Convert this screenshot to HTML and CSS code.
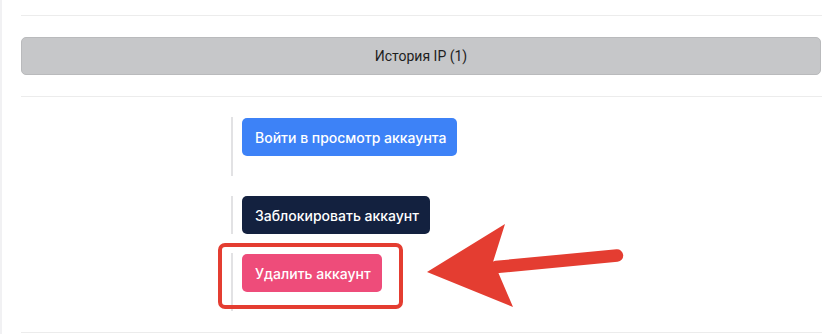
FILE: index.html
```html
<!DOCTYPE html>
<html lang="ru">
<head>
<meta charset="utf-8">
<link rel="stylesheet" href="styles.css">
</head>
<body>
<div class="page">
  <div class="panel">
    <div class="rule rule-top"></div>
    <button class="ip-btn">История IP (1)</button>
    <div class="rule rule-mid"></div>
    <div class="actions">
      <div class="group group-first">
        <button class="btn btn-blue">Войти в просмотр аккаунта</button>
      </div>
      <div class="group group-second">
        <button class="btn btn-navy">Заблокировать аккаунт</button>
      </div>
      <div class="group group-third">
        <button class="btn btn-pink">Удалить аккаунт</button>
      </div>
    </div>
    <div class="rule rule-bottom"></div>
  </div>
  <div class="highlight"></div>
  <svg class="arrow" width="822" height="334" viewBox="0 0 822 334">
    <line x1="496" y1="267" x2="617" y2="255.5" stroke="#e43d31" stroke-width="12.5" stroke-linecap="round"/>
    <polygon points="427,272 505,224 493,262 498,272 513,307" fill="#e43d31"/>
  </svg>
</div>
</body>
</html>
```
FILE: styles.css
```css
* { box-sizing: border-box; }
html, body { margin: 0; padding: 0; background: #fff; }
body { font-family: Inter, "Noto Sans", sans-serif; }

.page {
  position: relative;
  width: 822px;
  height: 334px;
  overflow: hidden;
}

.panel {
  border-left: 2px solid #f1f1f3;
  height: 334px;
  padding-left: 19px;
  padding-top: 15px;
  display: flex;
  flex-direction: column;
}

.rule {
  height: 1px;
  background: #ececec;
  width: 801px;
}

.ip-btn {
  margin-top: 21px;
  width: 800px;
  height: 38px;
  background: #c6c7c9;
  border: 1px solid #b9babc;
  border-radius: 5px;
  font-family: Roboto, "Noto Sans", sans-serif;
  font-size: 14px;
  color: #1e1e1e;
  padding: 0;
}

.rule-mid { margin-top: 21px; }

.actions {
  display: flex;
  flex-direction: column;
  align-items: flex-start;
  padding-left: 210px;
  margin-top: 20px;
}

.group {
  border-left: 2px solid #e2e2e4;
  padding-left: 9px;
}
.group-first { padding-top: 1px; padding-bottom: 20px; }
.group-second { margin-top: 20px; }
.group-third { margin-top: 19px; padding-top: 1px; padding-bottom: 19px; }

.btn {
  display: block;
  height: 38px;
  padding: 0 11px 0 13px;
  border: none;
  border-radius: 5px;
  color: #fff;
  font-family: Inter, "Noto Sans", sans-serif;
  font-size: 14px;
  font-weight: 500;
  white-space: nowrap;
}
.btn-blue { background: #3d82f7; }
.btn-navy { background: #13213f; }
.btn-pink { background: #ee4c7a; }

.rule-bottom { margin-top: 21px; }

.highlight {
  position: absolute;
  left: 218px;
  top: 243px;
  width: 185px;
  height: 66px;
  border: 4px solid #e43d31;
  border-radius: 7px;
}

.arrow {
  position: absolute;
  left: 0;
  top: 0;
}
```
